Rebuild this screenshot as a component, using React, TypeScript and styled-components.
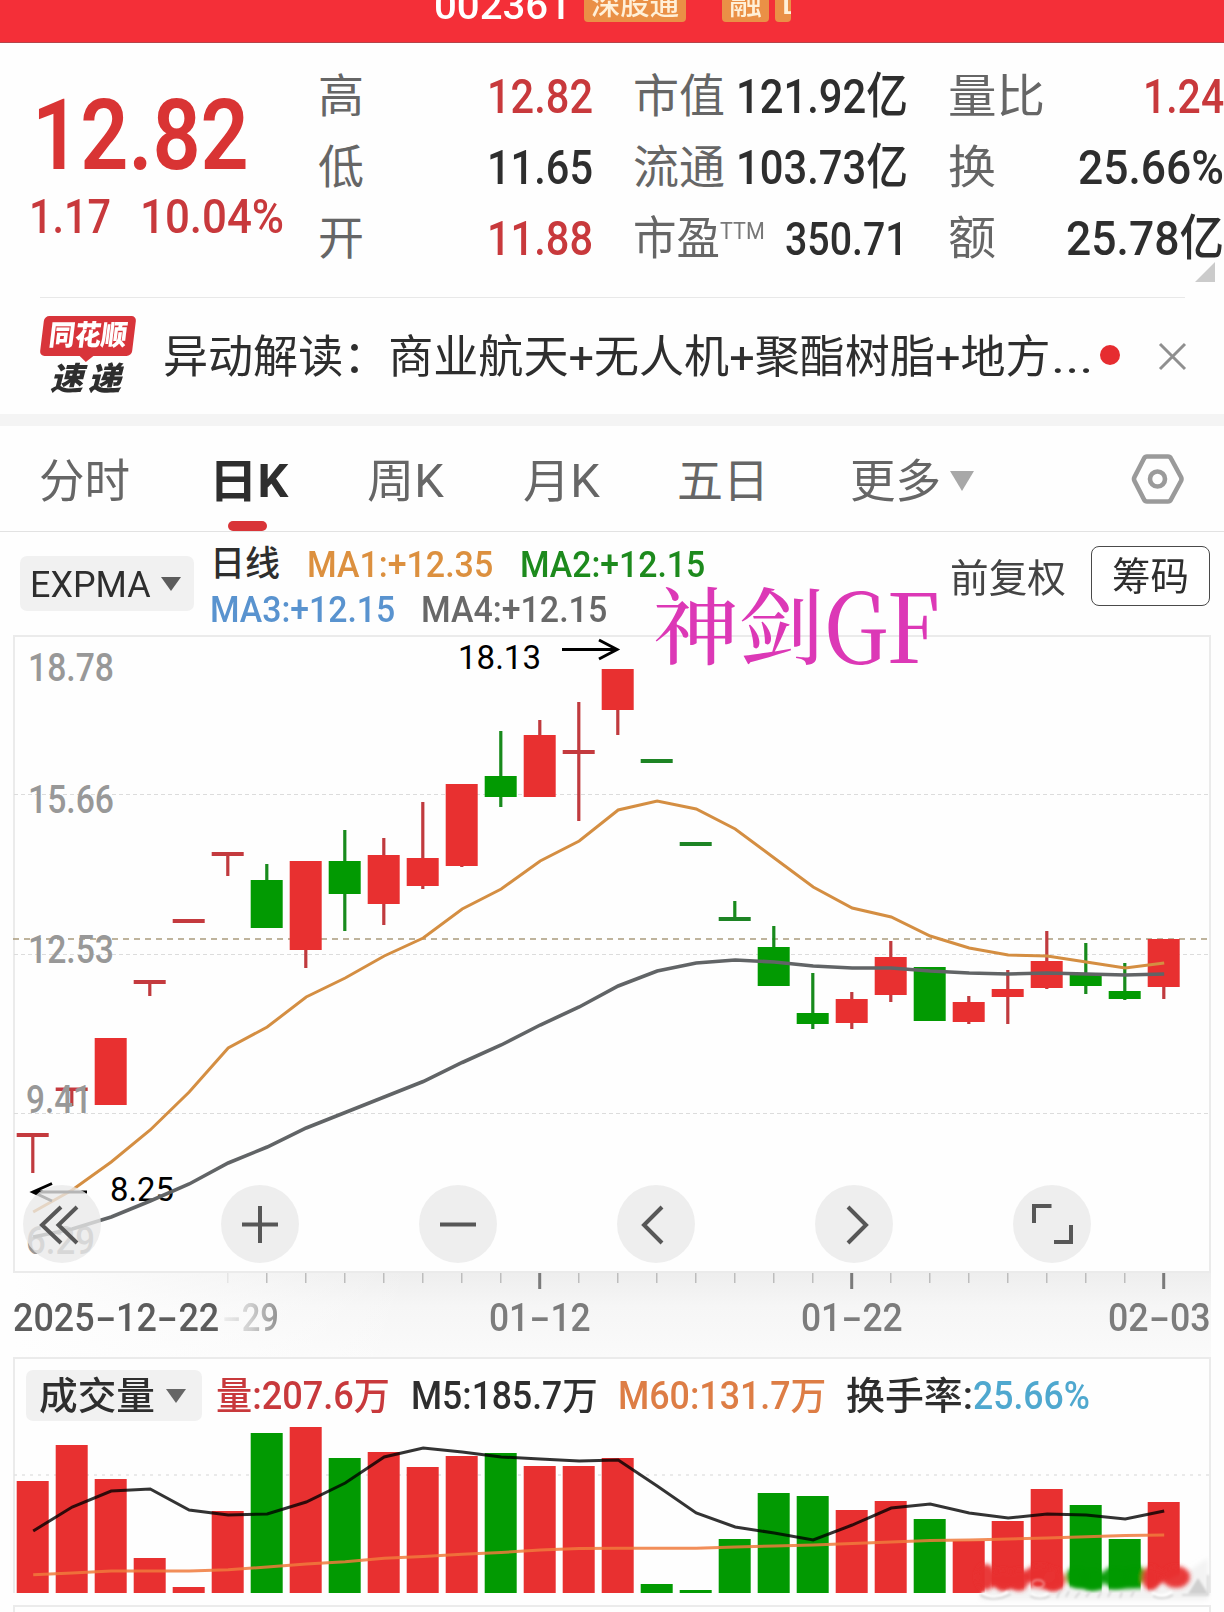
import React, { useLayoutEffect, useRef, useState } from "react";
import styled, { createGlobalStyle } from "styled-components";

const RED = "#e83030";
const GREEN = "#029a02";
const INK = "#2e2e2e";
const PRICE_RED = "#c8393c";
const SANS = `Roboto, "Noto Sans CJK SC", sans-serif`;

const GlobalStyle = createGlobalStyle`
  body { margin: 0; background: #fefefe; font-family: ${SANS}; }
  * { box-sizing: border-box; }
`;

/* ---------- text fitted to a given width ---------- */

const FitBox = styled.span<{ $w: number; $size: number; $color?: string; $weight?: number; $italic?: boolean }>`
  display: inline-block;
  flex: none;
  width: ${(p) => p.$w}px;
  height: ${(p) => p.$size * 1.2}px;
  line-height: ${(p) => p.$size * 1.2}px;
  font-size: ${(p) => p.$size}px;
  color: ${(p) => p.$color ?? INK};
  font-weight: ${(p) => p.$weight ?? 400};
  font-style: ${(p) => (p.$italic ? "italic" : "normal")};
  white-space: pre;
`;

const FitInner = styled.span`
  display: inline-block;
  transform-origin: 0 50%;
`;

type FitProps = {
  w: number;
  size: number;
  color?: string;
  weight?: number;
  italic?: boolean;
  children: React.ReactNode;
};

function Fit({ w, size, color, weight, italic, children }: FitProps) {
  const ref = useRef<HTMLSpanElement>(null);
  const [k, setK] = useState(1);
  useLayoutEffect(() => {
    if (ref.current && ref.current.offsetWidth) setK(w / ref.current.offsetWidth);
  }, [w, size]);
  return (
    <FitBox $w={w} $size={size} $color={color} $weight={weight} $italic={italic}>
      <FitInner ref={ref} style={{ transform: `scaleX(${k})` }}>
        {children}
      </FitInner>
    </FitBox>
  );
}

/* ---------- layout parts ---------- */

const Page = styled.main`
  width: 1224px;
  height: 1612px;
  overflow: hidden;
  display: flex;
  flex-direction: column;
  background: #fefefe;
`;

const Header = styled.header`
  flex: none;
  height: 43px;
  background: #f42f38;
  border-bottom: 1px solid #b5444a;
  overflow: hidden;
  padding-left: 434px;
`;

const HeaderRow = styled.div`
  height: 13px;
  display: flex;
  align-items: center;
`;

const Badge = styled.span<{ $w: number; $ml: number }>`
  flex: none;
  width: ${(p) => p.$w}px;
  height: 34px;
  margin-left: ${(p) => p.$ml}px;
  margin-top: -3px;
  border-radius: 4px;
  background: #ea9046;
  overflow: hidden;
  display: flex;
  align-items: center;
  padding-left: 7px;
`;

const Quote = styled.section`
  flex: none;
  height: 254px;
  display: flex;
  position: relative;
`;

const PriceBlock = styled.div`
  flex: none;
  width: 318px;
  padding-top: 39px;
`;

const PriceRow = styled.div`
  height: 108px;
  display: flex;
  align-items: center;
  padding-left: 32px;
`;

const ChangeRow = styled.div`
  height: 55px;
  display: flex;
  align-items: center;
  gap: 29px;
  padding-left: 29px;
`;

const Stats = styled.div`
  display: grid;
  grid-template-columns: 275px 275px 276px;
  grid-auto-rows: 71px;
  column-gap: 40px;
  padding-top: 19px;
`;

const Stat = styled.div`
  display: flex;
  align-items: center;
  justify-content: space-between;
`;

const StatLabel = styled.span`
  display: flex;
  align-items: center;
  margin: -1px 0 0 0;
`;

const Sup = styled.span`
  display: inline-flex;
  margin-top: -14px;
`;

const Corner = styled.i`
  position: absolute;
  right: 9px;
  bottom: 15px;
  border-left: 20px solid transparent;
  border-bottom: 20px solid #cbcbcb;
`;

const News = styled.section`
  flex: none;
  height: 117px;
  margin: 0 39px 0 40px;
  border-top: 1px solid #e8e8e8;
  display: flex;
  align-items: center;
`;

const NewsText = styled.div`
  flex: none;
  display: flex;
  padding-top: 4px;
`;

const CloseIcon = styled.svg`
  flex: none;
`;

const Logo = styled.div`
  flex: none;
  width: 97px;
  height: 80px;
  display: flex;
  flex-direction: column;
  margin-right: 26px;
`;

const LogoTop = styled.div`
  position: relative;
  height: 40px;
  margin: 0 3px 0 2px;
  transform: skewX(-7deg);
  background: #d8343a;
  border-radius: 5px;
  display: flex;
  align-items: center;
  justify-content: center;
  &::after {
    content: "";
    position: absolute;
    left: 39px;
    top: 39px;
    border: 8px solid transparent;
    border-top: 7px solid #d8343a;
    border-bottom: 0;
  }
`;

const LogoBottom = styled.div`
  height: 40px;
  display: flex;
  align-items: center;
  padding: 6px 0 0 10px;
  gap: 5px;
`;

const Dot = styled.i`
  flex: none;
  width: 20px;
  height: 20px;
  border-radius: 50%;
  background: #e62c30;
  margin: -3px 37px 0 6px;
`;

const Band = styled.div`
  flex: none;
  height: 12px;
  background: #f4f4f4;
`;

const Tabs = styled.nav`
  flex: none;
  height: 106px;
  border-bottom: 1px solid #e2e2e2;
  display: flex;
  align-items: stretch;
  padding-left: 39px;
`;

const Tab = styled.div<{ $w: number; $active?: boolean }>`
  flex: none;
  width: ${(p) => p.$w}px;
  display: flex;
  flex-direction: column;
  justify-content: space-between;
  padding-top: 28px;
  &::after {
    content: "";
    width: 39px;
    height: 10px;
    margin-left: 19px;
    border-radius: 5px;
    background: ${(p) => (p.$active ? "#d93438" : "transparent")};
  }
`;

const TabLine = styled.div`
  display: flex;
  align-items: center;
`;

const Tri = styled.i<{ $w: number; $h: number; $color: string; $ml: number }>`
  border-left: ${(p) => p.$w / 2}px solid transparent;
  border-right: ${(p) => p.$w / 2}px solid transparent;
  border-top: ${(p) => p.$h}px solid ${(p) => p.$color};
  margin: -2px 0 0 ${(p) => p.$ml}px;
`;

const SettingsIcon = styled.svg`
  margin: 25px 0 0 113px;
  flex: none;
`;

const Indicators = styled.section`
  flex: none;
  height: 103px;
  display: flex;
  padding-left: 20px;
  position: relative;
`;

const Pill = styled.div<{ $w: number; $h: number; $pl: number }>`
  flex: none;
  width: ${(p) => p.$w}px;
  height: ${(p) => p.$h}px;
  border-radius: 7px;
  background: #f1f1f1;
  display: flex;
  align-items: center;
  padding: 3px 0 0 ${(p) => p.$pl}px;
`;

const IndicatorPill = styled.div`
  padding-top: 24px;
  margin-right: 16px;
`;

const MaRows = styled.div`
  width: 740px;
  padding-top: 10px;
`;

const MaRow = styled.div`
  height: 45px;
  display: flex;
  align-items: center;
`;

const Gap = styled.i<{ $w: number }>`
  flex: none;
  width: ${(p) => p.$w}px;
`;

const RightTools = styled.div`
  display: flex;
  height: 60px;
  margin-top: 14px;
  align-items: center;
`;

const AdjustMode = styled.span`
  display: flex;
  padding-top: 7px;
`;

const ChipButton = styled.button`
  width: 119px;
  height: 60px;
  margin: 0 0 0 25px;
  padding: 3px 0 0;
  border: 1.5px solid #4a4a4a;
  border-radius: 8px;
  background: #fff;
  font-family: inherit;
  display: flex;
  align-items: center;
  justify-content: center;
`;

const Watermark = styled.div`
  position: absolute;
  left: 653px;
  top: 40px;
  z-index: 2;
  display: flex;
  align-items: center;
  height: 100px;
  font-family: "Noto Serif CJK SC", "Liberation Serif", "Noto Sans CJK SC", serif;
`;

const ChartPanel = styled.section`
  flex: none;
  position: relative;
  height: 638px;
  margin: 0 13px;
  width: 1198px;
  border: 2px solid #ebebeb;
`;

const Plot = styled.svg`
  position: absolute;
  left: -15px;
  top: -2px;
  display: block;
`;

const ChartControls = styled.div`
  position: absolute;
  left: 8px;
  bottom: 8px;
  display: flex;
  gap: 120px;
`;

const RoundButton = styled.button`
  width: 78px;
  height: 78px;
  border: 0;
  padding: 0;
  border-radius: 50%;
  background: rgba(233, 233, 233, 0.78);
  display: flex;
`;

const Axis = styled.section`
  flex: none;
  height: 84px;
  margin: 0 13px;
  background: linear-gradient(90deg, #fefefe 0, rgba(254, 254, 254, 0) 400px),
    linear-gradient(180deg, #eeeeee 0, #f6f6f6 40%, #fafafa 100%);
`;

const Ticks = styled.svg`
  display: block;
`;

const Dates = styled.div`
  display: flex;
  align-items: center;
  height: 50px;
  margin-top: 2px;
`;

const Hyphen = styled.span`
  display: inline-block;
  transform: scaleX(1.7);
  margin: 0 0.13em;
`;

const FadeDate = styled.span`
  display: inline-flex;
  -webkit-mask-image: linear-gradient(90deg, rgba(0, 0, 0, 0.1), rgba(0, 0, 0, 0.4) 50%, #000);
  mask-image: linear-gradient(90deg, rgba(0, 0, 0, 0.1), rgba(0, 0, 0, 0.4) 50%, #000);
`;

const VolumePanel = styled.section`
  flex: none;
  width: 1198px;
  height: 236px;
  margin: 0 13px;
  position: relative;
  border: 2px solid #ebebeb;
  border-bottom: 0;
`;

const VolumeHead = styled.div`
  display: flex;
  align-items: center;
  padding: 11px 0 0 11px;
`;

const VolumeValues = styled.div`
  display: flex;
  padding-top: 3px;
`;

const NextPanel = styled.section`
  flex: none;
  height: 40px;
  margin: 12px 13px 0;
  width: 1198px;
  border: 2px solid #ebebeb;
`;

/* ---------- data ---------- */

const cx = (i: number) => 32.7 + 39 * i;

/* [up, body top, body bottom, high, low] */
const candles: [number, number, number, number, number][] = [
  [1, 1133, 1137, 1133, 1173], [1, 1087.5, 1091, 1088, 1106], [1, 1038, 1105, 1038, 1105],
  [1, 980, 984, 980, 996], [1, 919, 923, 919, 923], [1, 852, 856, 852, 876],
  [0, 880, 928, 864, 928], [1, 861, 950, 861, 968], [0, 861, 894, 830, 931],
  [1, 855, 904, 838, 925], [1, 858, 886, 802, 889], [1, 784, 866, 784, 867],
  [0, 776, 797, 731, 807], [1, 735, 797, 720, 797], [1, 750, 754, 702, 821],
  [1, 669, 710, 669, 735], [0, 759, 763, 759, 763], [0, 842, 846, 842, 846],
  [0, 917, 921, 901, 921], [0, 947, 986, 926, 986], [0, 1013, 1024, 973, 1029],
  [1, 999, 1023, 992, 1029], [1, 957, 995, 941, 1002], [0, 967, 1021, 967, 1021],
  [1, 1002, 1022, 996, 1024], [1, 989, 997, 970, 1024], [1, 961, 988, 931, 989],
  [0, 974, 986, 943, 994], [0, 991, 999, 963, 1000], [1, 939, 987, 939, 999],
];

const fast = [1212, 1190, 1162, 1130, 1092, 1048, 1027, 997, 978, 956, 938, 909, 889, 861, 841, 810, 801, 809, 829, 858, 887, 908, 917, 936, 948, 955, 956, 962, 968, 963];
const slow = [1237, 1229, 1217, 1201, 1184, 1163, 1147, 1128, 1112.5, 1097, 1081.5, 1062.5, 1045, 1025, 1007, 986, 971, 963, 960, 962, 966, 968, 968, 971, 973, 974, 973, 974, 975, 974];
const volTop = [1481, 1445, 1479, 1558, 1587, 1511, 1433, 1427, 1458, 1452, 1467, 1456, 1453, 1466, 1466, 1458, 1584, 1590, 1539, 1493, 1496, 1510, 1501, 1519, 1541, 1521, 1489, 1505, 1539, 1502];
const m5 = [1531, 1507, 1491, 1489, 1510, 1515, 1514, 1502, 1483, 1457, 1448, 1452, 1457, 1459, 1461, 1460, 1486, 1513, 1527, 1533, 1540, 1525, 1508, 1504, 1513, 1518, 1514, 1515, 1519, 1511];
const m60 = [1574.7, 1573, 1571, 1571, 1571, 1569.7, 1567, 1564, 1561.7, 1558.3, 1556.5, 1554.3, 1552.5, 1550, 1548.5, 1548.3, 1548.3, 1548.3, 1547, 1546, 1545, 1543.5, 1542, 1540.5, 1540, 1539, 1538, 1536.7, 1535.5, 1535];

const line = (ys: number[]) => ys.map((y, i) => `${cx(i) + 0.5},${y}`).join(" ");

type SvgTextProps = { x: number; y: number; w: number; size: number; fill: string; weight?: number; children: string };
const SvgText = ({ x, y, w, size, fill, weight, children }: SvgTextProps) => (
  <text x={x} y={y} fontSize={size} fill={fill} fontWeight={weight} textLength={w} lengthAdjust="spacingAndGlyphs" fontFamily="Roboto, sans-serif">
    {children}
  </text>
);

const prices: [string, number, number, number][] = [
  ["18.78", 28, 681, 86], ["15.66", 28, 813, 86], ["12.53", 28, 963, 86], ["9.41", 26, 1113, 66], ["6.29", 26, 1254, 69],
];

const icons = [
  <path d="M38 22 19 40 38 58M54 22 35.5 40 54 58" />,
  <path d="M21 39.5H57M39 21V58" />,
  <path d="M21 39.5H57" />,
  <path d="M45 22 27 40 45 58" />,
  <path d="M33 22 51 40 33 58" />,
  <path d="M21 38V21H38.500M41 57H58V40" />,
];

const PriceChart = () => (
  <ChartPanel>
    <Plot width="1224" height="638" viewBox="0 635 1224 638">
      {[794, 954, 1113].map((y) => (
        <line key={y} x1="14" x2="1210" y1={y + 0.5} y2={y + 0.5} stroke="#dcdcdc" strokeDasharray="4 3" />
      ))}
      <line x1="13" x2="1210" y1="939" y2="939" stroke="#a99a7c" strokeWidth="1.6" strokeDasharray="6 5" />
      {candles.map(([up, top, bottom, high, low], i) => (
        <g key={i} fill={up ? (bottom - top < 5 ? "#c43a3e" : RED) : bottom - top < 5 ? "#1d8424" : GREEN}>
          <rect x={cx(i) - 1.5} y={high} width="3.2" height={low - high} fill={up ? "#c03a3e" : "#188a1c"} />
          <rect x={cx(i) - 16} y={top} width="32" height={bottom - top} />
        </g>
      ))}
      {prices.map(([t, x, y, w]) => (
        <SvgText key={t} x={x} y={y} w={w} size={38} weight={500} fill="#989898">{t}</SvgText>
      ))}
      <polyline points={line(fast)} fill="none" stroke="#d48e42" strokeWidth="3" />
      <SvgText x={110} y={1201} w={64} size={34} fill="#000">8.25</SvgText>
      <polyline points={line(slow)} fill="none" stroke="#616466" strokeWidth="3.6" />
      <SvgText x={458} y={669} w={83} size={34} fill="#000">18.13</SvgText>
      <path d="M562 649.5H617M599 640 617 649.500 599 659" fill="none" stroke="#000" strokeWidth="3" />
      <path d="M87 1192H33M52 1183.500 33 1192 52 1201" fill="none" stroke="#000" strokeWidth="3" />
    </Plot>
    <ChartControls>
      {icons.map((icon, i) => (
        <RoundButton key={i}>
          <svg width="78" height="78" fill="none" stroke="#575757" strokeWidth="4">{icon}</svg>
        </RoundButton>
      ))}
    </ChartControls>
  </ChartPanel>
);

/* [centre x, centre y, rx, ry, colour] */
const smudges: [number, number, number, number, string][] = [
  [986, 1577, 10, 13, RED], [1003, 1580, 9, 11, RED], [1019, 1580, 10, 11, RED], [1040, 1575, 16, 10, RED], [1054, 1580, 11, 11, RED],
  [1078, 1577, 12, 11, GREEN], [1092, 1579, 12, 11, GREEN], [1116, 1577, 14, 11, GREEN], [1134, 1575, 12, 10, GREEN],
  [1151, 1578, 9, 12, RED], [1176, 1577, 14, 11, RED],
];

const VolumeChart = () => (
  <VolumePanel>
    <Plot width="1224" height="248" viewBox="0 1357 1224 248">
      <defs>
        <filter id="soft" x="-20%" y="-50%" width="140%" height="200%"><feGaussianBlur stdDeviation="2" /></filter>
        <filter id="faint" x="-20%" y="-50%" width="140%" height="200%"><feGaussianBlur stdDeviation="0.8" /></filter>
      </defs>
      <line x1="14" x2="1210" y1="1475" y2="1475" stroke="#e4e4e4" strokeWidth="1.5" strokeDasharray="3 5" />
      {volTop.map((y, i) => (
        <rect key={i} x={cx(i) - 16} y={y} width="32" height={1593 - y} fill={candles[i][0] ? RED : GREEN} />
      ))}
      <polyline points={line(m60)} fill="none" stroke="#f07a3c" strokeOpacity="0.85" strokeWidth="3" />
      <polyline points={line(m5)} fill="none" stroke="#000" strokeOpacity="0.8" strokeWidth="3" />
      <path d="M980 1597 990 1585 1004 1589 1030 1587 1052 1590 1070 1585 1090 1590 1150 1588 1190 1570 1208 1558V1600H980Z" fill="#f3f3f3" filter="url(#soft)" />
      <path d="M1188 1594 1198 1578 1207 1592V1594Z" fill="#cfcfcf" filter="url(#faint)" />
      <g filter="url(#soft)">
        {smudges.map(([x, y, rx, ry, c], i) => (
          <ellipse key={i} cx={x} cy={y} rx={rx} ry={ry} fill={c} fillOpacity="0.95" />
        ))}
      </g>
      <g fill="none" stroke="#fff" strokeWidth="3" filter="url(#faint)">
        <path d="M982 1593q12 9 26-1M1031 1594q8 6 17 0M1152 1593q10 6 20-1" />
        <ellipse cx="1038" cy="1584" rx="6" ry="4" strokeOpacity="0.4" strokeWidth="2" />
      </g>
      <g fill="none" stroke="#cfcfcf" strokeWidth="1.6" filter="url(#faint)">
        <path d="M980 1595q14 8 31-1M1030 1596q10 5 20 0M1057 1598l3-7M1066 1597l3-6M1075 1598l5-6M1086 1597l4-5M1098 1598l3-6M1108 1597l3-6M1120 1598l2-6M1131 1597l3-6M1153 1596q10 5 20-1M1182 1595h26v-20" />
      </g>
    </Plot>
    <VolumeHead>
      <Pill $w={176} $h={51} $pl={13}>
        <Fit w={116} size={38} weight={500}>成交量</Fit>
        <Tri $w={20} $h={14} $color="#666" $ml={11} />
      </Pill>
      <Gap $w={14} />
      <VolumeValues>
        <Fit w={174} size={38} weight={500} color={PRICE_RED}>量:207.6万</Fit>
        <Gap $w={21} />
        <Fit w={187} size={38} weight={500}>M5:185.7万</Fit>
        <Gap $w={20} />
        <Fit w={208} size={38} weight={500} color="#dd7d45">M60:131.7万</Fit>
        <Gap $w={20} />
        <Fit w={127} size={38} weight={500}>换手率:</Fit>
        <Fit w={117} size={38} weight={500} color="#4fa8cf">25.66%</Fit>
      </VolumeValues>
    </VolumeHead>
  </VolumePanel>
);

const stats: { label: string; lw: number; value: string; vw: number; color?: string; ttm?: boolean }[] = [
  { label: "高", lw: 46, value: "12.82", vw: 106, color: PRICE_RED },
  { label: "市值", lw: 92, value: "121.92亿", vw: 172 },
  { label: "量比", lw: 97, value: "1.24", vw: 81, color: PRICE_RED },
  { label: "低", lw: 46, value: "11.65", vw: 106 },
  { label: "流通", lw: 92, value: "103.73亿", vw: 172 },
  { label: "换", lw: 48, value: "25.66%", vw: 146 },
  { label: "开", lw: 46, value: "11.88", vw: 106, color: PRICE_RED },
  { label: "市盈", lw: 87, value: "350.71", vw: 123, ttm: true },
  { label: "额", lw: 48, value: "25.78亿", vw: 158 },
];

const tabs: { text: string; w: number; tw: number; active?: boolean }[] = [
  { text: "分时", w: 170, tw: 91 },
  { text: "日K", w: 158, tw: 79, active: true },
  { text: "周K", w: 156, tw: 77 },
  { text: "月K", w: 154, tw: 77 },
  { text: "五日", w: 173, tw: 92 },
];

export default function App() {
  return (
    <Page>
      <GlobalStyle />
      <Header>
        <HeaderRow>
          <Fit w={137} size={39} color="#fff" weight={500}>002361</Fit>
          <Badge $w={102} $ml={13}><Fit w={88} size={29} color="#fff0d8" weight={500}>深股通</Fit></Badge>
          <Badge $w={47} $ml={36}><Fit w={33} size={29} color="#fff0d8" weight={500}>融</Fit></Badge>
          <Badge $w={16} $ml={6}><Fit w={34} size={28} color="#fff0d8" weight={500}>L2</Fit></Badge>
        </HeaderRow>
      </Header>

      <Quote>
        <PriceBlock>
          <PriceRow><Fit w={217} size={98} weight={600} color="#d93434">12.82</Fit></PriceRow>
          <ChangeRow>
            <Fit w={82} size={49} weight={500} color={PRICE_RED}>1.17</Fit>
            <Fit w={144} size={49} weight={500} color={PRICE_RED}>10.04%</Fit>
          </ChangeRow>
        </PriceBlock>
        <Stats>
          {stats.map((s) => (
            <Stat key={s.label}>
              <StatLabel>
                <Fit w={s.lw} size={46} color="#666">{s.label}</Fit>
                {s.ttm && <Sup><Fit w={45} size={23} color="#777">TTM</Fit></Sup>}
              </StatLabel>
              <Fit w={s.vw} size={s.value === "350.71" ? 46 : 49} weight={500} color={s.color}>{s.value}</Fit>
            </Stat>
          ))}
        </Stats>
        <Corner />
      </Quote>

      <News>
        <Logo>
          <LogoTop><Fit w={78} size={28} weight={900} color="#fff">同花顺</Fit></LogoTop>
          <LogoBottom>
            <Fit w={33} size={32} weight={900} italic>速</Fit>
            <Fit w={33} size={32} weight={900} italic>递</Fit>
          </LogoBottom>
        </Logo>
        <NewsText>
          <Fit w={888} size={45}>异动解读：商业航天+无人机+聚酯树脂+地方</Fit>
          <Fit w={43} size={45}>...</Fit>
        </NewsText>
        <Dot />
        <CloseIcon width="30" height="30" fill="none" stroke="#8f8f8f" strokeWidth="3"><path d="M3 3 28 28M28 3 3 28" /></CloseIcon>
      </News>
      <Band />

      <Tabs>
        {tabs.map((t) => (
          <Tab key={t.text} $w={t.w} $active={t.active}>
            <Fit w={t.tw} size={46} weight={t.active ? 700 : 400} color={t.active ? INK : "#666"}>{t.text}</Fit>
          </Tab>
        ))}
        <Tab $w={168}>
          <TabLine>
            <Fit w={91} size={46} color="#666">更多</Fit>
            <Tri $w={24} $h={20} $color="#a8a8a8" $ml={9} />
          </TabLine>
        </Tab>
        <SettingsIcon width="56" height="56" fill="none" stroke="#9a9a9a" strokeWidth="4.6" strokeLinejoin="round">
          <path d="M16 5.500H37Q39 5.500 40 7.500L50 26Q51 28 50 30L40 48.500Q39 50.500 37 50.500H16Q14 50.500 13 48.500L3.500 30Q2.500 28 3.500 26L13 7.500Q14 5.500 16 5.500Z" />
          <circle cx="26.500" cy="28" r="7.500" />
        </SettingsIcon>
      </Tabs>

      <Indicators>
        <IndicatorPill>
          <Pill $w={174} $h={55} $pl={10}>
            <Fit w={121} size={36.5}>EXPMA</Fit>
            <Tri $w={20} $h={14} $color="#5c5c5c" $ml={10} />
          </Pill>
        </IndicatorPill>
        <MaRows>
          <MaRow>
            <Fit w={70} size={35} weight={500}>日线</Fit>
            <Gap $w={27} />
            <Fit w={186} size={36.5} weight={500} color="#dc903f">MA1:+12.35</Fit>
            <Gap $w={27} />
            <Fit w={185} size={36.5} weight={500} color="#1d8a1d">MA2:+12.15</Fit>
          </MaRow>
          <MaRow>
            <Fit w={185} size={36.5} weight={500} color="#5993cf">MA3:+12.15</Fit>
            <Gap $w={26} />
            <Fit w={186} size={36.5} weight={500} color="#686868">MA4:+12.15</Fit>
          </MaRow>
        </MaRows>
        <RightTools>
          <AdjustMode><Fit w={116} size={39} color="#444">前复权</Fit></AdjustMode>
          <ChipButton><Fit w={77} size={39}>筹码</Fit></ChipButton>
        </RightTools>
        <Watermark>
          <Fit w={171} size={84} color="#dc38b6" weight={500}>神剑</Fit>
          <Fit w={116} size={96} color="#dc38b6" weight={500}>GF</Fit>
        </Watermark>
      </Indicators>

      <PriceChart />

      <Axis>
        <Ticks width="1198" height="18" viewBox="13 0 1198 18">
          {candles.map((_, i) => {
            if (i < 5) return null;
            const major = (i - 13) % 8 === 0 && i >= 13;
            return (
              <rect key={i} x={cx(i) - (major ? 1.5 : 0.7)} y="0" width={major ? 3 : 1.5} height={major ? 16 : 10}
                fill={major ? "#7a7a7a" : "#bdbdbd"} opacity={i === 5 ? 0.3 : 1} />
            );
          })}
        </Ticks>
        <Dates>
          <Fit w={206} size={38.5} weight={500} color="#5c5c5c">2025<Hyphen>-</Hyphen>12<Hyphen>-</Hyphen>22</Fit>
          <Gap $w={3} />
          <FadeDate><Fit w={57} size={38.5} weight={500} color="#8f8f8f"><Hyphen>-</Hyphen>29</Fit></FadeDate>
          <Gap $w={210} />
          <Fit w={102} size={38.5} weight={500} color="#7c7c7c">01<Hyphen>-</Hyphen>12</Fit>
          <Gap $w={210} />
          <Fit w={102} size={38.5} weight={500} color="#7c7c7c">01<Hyphen>-</Hyphen>22</Fit>
          <Gap $w={205} />
          <Fit w={103} size={38.5} weight={500} color="#7c7c7c">02<Hyphen>-</Hyphen>03</Fit>
        </Dates>
      </Axis>

      <VolumeChart />
      <NextPanel />
    </Page>
  );
}
